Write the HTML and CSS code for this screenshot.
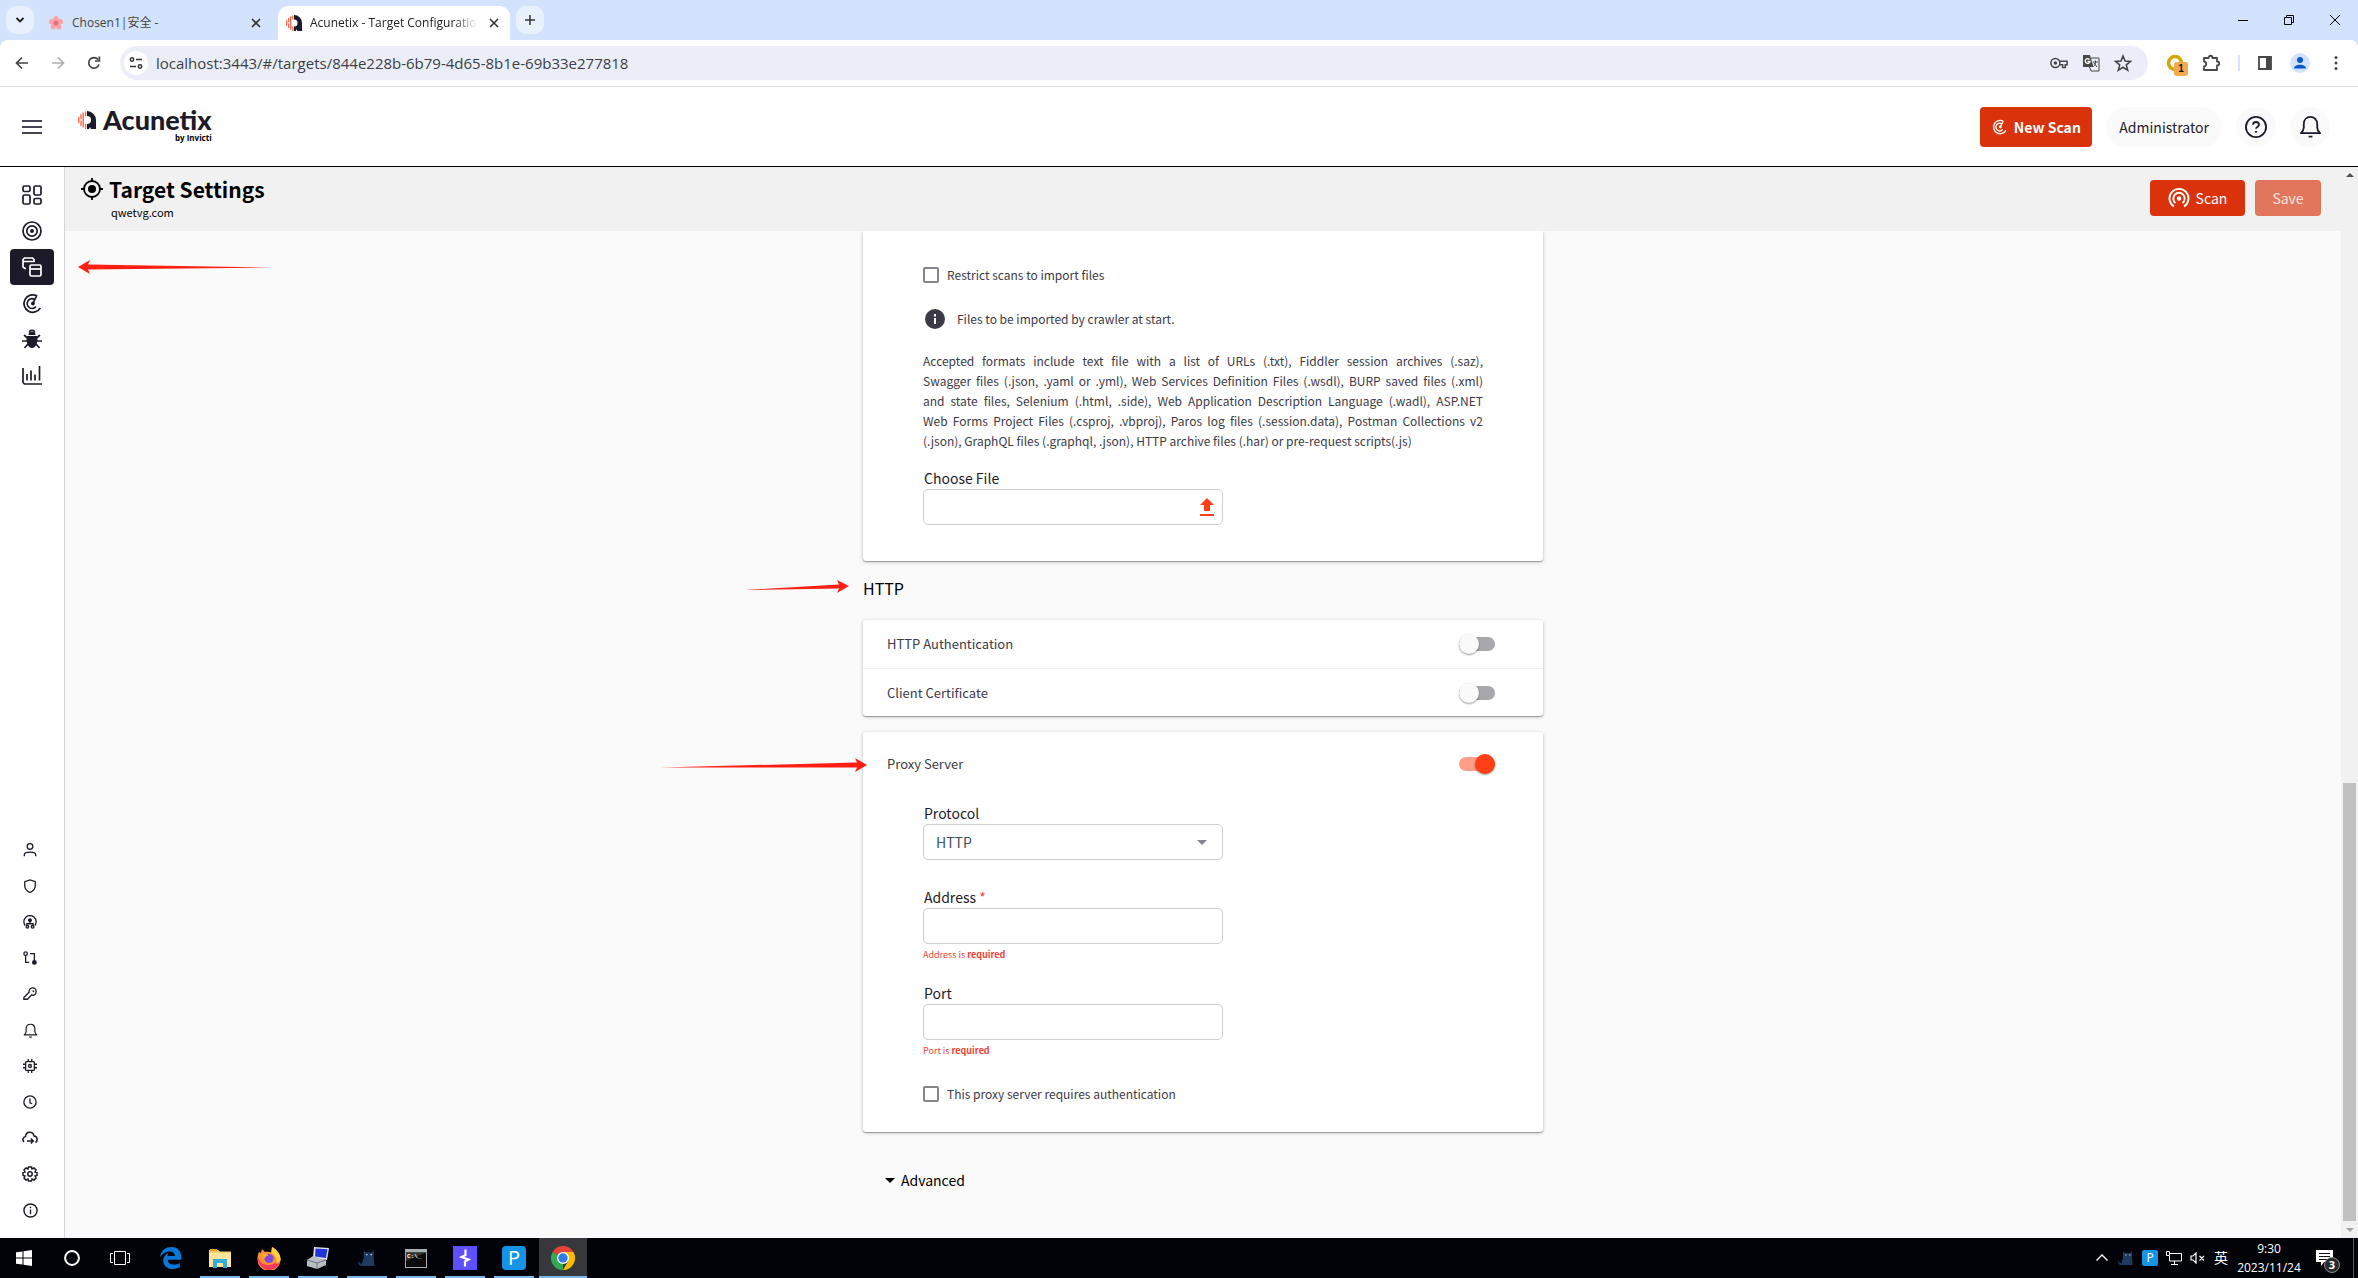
FILE: index.html
```html
<!DOCTYPE html>
<html lang="en">
<head>
<meta charset="utf-8">
<title>Acunetix - Target Configuration</title>
<link rel="stylesheet" href="styles.css">
</head>
<body>
<svg class="defs" aria-hidden="true">
  <symbol id="logo" viewBox="0 0 18 18">
    <path d="M9 0a9 9 0 0 1 9 9v9h-5l-1-2-1 2H9v-5a4 4 0 0 0 0-8z" fill="#1d1b29"/>
    <path d="M.8 6v6M3 3.200v5M3 9.500v5.500M5.200 1.500v15M7.600 .5v4.500M7.600 13v5" stroke="#f5694a" stroke-width="1.400" fill="none"/>
  </symbol>
  <symbol id="radar" viewBox="0 0 24 24">
    <path d="M17 3.200A10 10 0 1 0 21 17M14 7a5.600 5.600 0 1 0 2 8.500M12.500 12l4.500-9.500" fill="none" stroke="currentColor" stroke-width="2"/><circle cx="12.500" cy="12" r="2.200" fill="currentColor"/>
  </symbol>
  <symbol id="bell" viewBox="0 0 24 24">
    <path d="M2 19h20c-2-2-3-3-3-6V9.500C19 5 16 2 12 2S5 5 5 9.500V13c0 3-1 4-3 6zM10 22.500h4" fill="none" stroke="currentColor" stroke-width="1.900" stroke-linejoin="round"/>
  </symbol>
  <symbol id="cross" viewBox="0 0 12 12"><path d="M2 2l8 8M10 2l-8 8" stroke="currentColor" stroke-width="1.600"/></symbol>
  <symbol id="cat" viewBox="0 0 16 16"><path d="M5 1l2 2h5l2-2v7l.500 7H3.500C0 15-.5 12 1 10c-.3 2 .2 3 2.500 3.200L5 8z" fill="#1d3a63"/><path d="M7 5h1.500M11 5h1.500" stroke="#a8c0e0" stroke-width="1.200"/></symbol>
</svg>

<header class="browser">
  <div class="tabs">
    <button class="round-btn" aria-label="Search tabs"><svg viewBox="0 0 12 12" width="12" height="12"><path d="M2.500 4l3.500 3.500L9.500 4" fill="none" stroke="#222" stroke-width="1.900"/></svg></button>
    <div class="tab">
      <svg class="tab-icon" viewBox="0 0 16 16" width="16" height="16"><g fill="#ffa0a6"><circle cx="8" cy="3.500" r="2.600"/><circle cx="12.300" cy="6.700" r="2.600"/><circle cx="10.700" cy="11.700" r="2.600"/><circle cx="5.300" cy="11.700" r="2.600"/><circle cx="3.700" cy="6.700" r="2.600"/></g><circle cx="8" cy="8" r="2.500" fill="#ef6a78"/></svg>
      <span class="tab-title">Chosen1|安全 -</span>
      <button class="tab-close" aria-label="Close tab"><svg width="12" height="12"><use href="#cross"/></svg></button>
    </div>
    <div class="tab tab-active">
      <svg class="tab-icon" width="16" height="16"><use href="#logo"/></svg>
      <span class="tab-title">Acunetix - Target Configuration</span>
      <button class="tab-close" aria-label="Close tab"><svg width="12" height="12"><use href="#cross"/></svg></button>
    </div>
    <button class="round-btn" aria-label="New tab"><svg viewBox="0 0 12 12" width="12" height="12"><path d="M6 1v10M1 6h10" stroke="#333" stroke-width="1.500"/></svg></button>
    <div class="window-controls">
      <button aria-label="Minimize"><svg viewBox="0 0 10 10" width="10" height="10"><path d="M0 5.500h10" stroke="#000"/></svg></button>
      <button aria-label="Restore"><svg viewBox="0 0 10 10" width="10" height="10"><path d="M.5 2.500h7v7h-7zM2.500 2.500v-2h7v7h-2" fill="none" stroke="#000"/></svg></button>
      <button aria-label="Close"><svg viewBox="0 0 10 10" width="10" height="10"><path d="M0 0l10 10M10 0L0 10" stroke="#000"/></svg></button>
    </div>
  </div>
  <div class="toolbar">
    <div class="nav-btns">
      <button aria-label="Back"><svg viewBox="0 0 14 14" width="14" height="14"><path d="M13 7H2M7 1.500L1.500 7 7 12.500" fill="none" stroke="#444" stroke-width="1.700"/></svg></button>
      <button aria-label="Forward"><svg viewBox="0 0 14 14" width="14" height="14"><path d="M1 7h11M7 1.500L12.500 7 7 12.500" fill="none" stroke="#b0b0b0" stroke-width="1.700"/></svg></button>
      <button aria-label="Reload"><svg viewBox="0 0 14 14" width="14" height="14"><path d="M12 8.500A5.300 5.300 0 1 1 11 3.400M12.400 .5v4.500H8" fill="none" stroke="#444" stroke-width="1.700"/></svg></button>
    </div>
    <div class="omnibox">
      <span class="site-info"><svg viewBox="0 0 14 14" width="14" height="14"><path d="M7 3.500h6M1 10.500h6" stroke="#333" stroke-width="1.600"/><circle cx="3" cy="3.500" r="1.700" fill="none" stroke="#333" stroke-width="1.500"/><circle cx="11" cy="10.500" r="1.700" fill="none" stroke="#333" stroke-width="1.500"/></svg></span>
      <input class="url" type="text" aria-label="Address bar" value="localhost:3443/#/targets/844e228b-6b79-4d65-8b1e-69b33e277818">
      <svg viewBox="0 0 20 20" width="18" height="18"><g fill="none" stroke="#474747" stroke-width="1.700"><circle cx="6" cy="10" r="5"/><path d="M10.500 8H19v4h-2v3h-3v-3h-3.500"/></g><circle cx="6" cy="10" r="2" fill="#474747"/></svg>
      <svg viewBox="0 0 18 18" width="18" height="18"><path d="M1 1h7l3.500 12H1z" fill="#474747"/><path d="M9 4h8v13H9l-1.500-4M11 8h5M13.500 6.500v2c0 2-1 3-2 4M12 9l3 4" fill="none" stroke="#474747"/><path d="M7.500 5.500A2.400 2.400 0 1 0 8 7.500H5.500" fill="none" stroke="#fff" stroke-width="1.300"/></svg>
      <svg viewBox="0 0 18 18" width="18" height="18"><path d="M9 2l2 5 5.500.4-4.200 3.500 1.400 5.300L9 13.300l-4.700 2.900 1.400-5.300L1.500 7.400 7 7z" fill="none" stroke="#474747" stroke-width="1.600"/></svg>
    </div>
    <div class="extensions">
      <span class="ext"><svg viewBox="0 0 18 18" width="18" height="18"><path d="M9 15.500A6.500 6.500 0 1 1 15.500 9" fill="none" stroke="#d0aa00" stroke-width="3.500"/></svg><b class="ext-badge">1</b></span>
      <svg viewBox="0 0 18 18" width="18" height="18"><path d="M2 4h4.500c0-3 4-3 4 0H15v3.500c3 0 3 4 0 4V16H2v-3.500c3-.5 3-4.500 0-5z" fill="none" stroke="#474747" stroke-width="1.800" stroke-linejoin="round"/></svg>
      <i class="divider"></i>
      <svg viewBox="0 0 14 14" width="14" height="14"><path d="M1 1h12v12H1z" fill="none" stroke="#474747" stroke-width="1.800"/><path d="M8 1h5v12H8z" fill="#474747"/></svg>
      <svg viewBox="0 0 20 20" width="20" height="20"><circle cx="10" cy="10" r="10" fill="#d3e3fd"/><circle cx="10" cy="7" r="3" fill="#0b57d0"/><path d="M4 15.500c0-5 12-5 12 0z" fill="#0b57d0"/></svg>
      <svg class="kebab" viewBox="0 0 4 16" width="4" height="16"><g fill="#474747"><circle cx="2" cy="2.500" r="1.500"/><circle cx="2" cy="8" r="1.500"/><circle cx="2" cy="13.500" r="1.500"/></g></svg>
    </div>
  </div>
</header>

<header class="app-header">
  <button class="plain menu-btn" aria-label="Menu"><svg viewBox="0 0 20 14" width="20" height="14"><path d="M0 1h20M0 7h20M0 13h20" stroke="#45434f" stroke-width="2"/></svg></button>
  <a class="brand" href="#">
    <svg width="18" height="18"><use href="#logo"/></svg>
    <span class="brand-name">Acunetix<small>by Invicti</small></span>
  </a>
  <div class="header-actions">
    <button class="btn btn-new"><svg width="16" height="16"><use href="#radar"/></svg>New Scan</button>
    <button class="pill">Administrator</button>
    <button class="circle" aria-label="Help"><svg viewBox="0 0 24 24" width="22" height="22"><circle cx="12" cy="12" r="11" fill="none" stroke="#1d1b29" stroke-width="2"/><path d="M8.800 9.500c0-4 6.400-4 6.400 0 0 2.500-3.200 2.500-3.200 4.500" fill="none" stroke="#1d1b29" stroke-width="2"/><circle cx="12" cy="17.300" r="1.200" fill="#1d1b29"/></svg></button>
    <button class="circle" aria-label="Notifications"><svg width="23" height="23"><use href="#bell"/></svg></button>
  </div>
</header>

<div class="workspace">
  <nav class="sidebar" aria-label="Main">
    <div class="side-group">
      <a href="#" aria-label="Overview"><svg viewBox="0 0 20 20" width="20" height="20"><g fill="none" stroke="#1d1b29" stroke-width="1.700"><rect x="1" y="1" width="7" height="5.500" rx="1.500"/><rect x="12" y="1" width="7" height="9" rx="1.500"/><rect x="1" y="10" width="7" height="9" rx="1.500"/><rect x="12" y="13.500" width="7" height="5.500" rx="1.500"/></g></svg></a>
      <a href="#" aria-label="Discovery"><svg viewBox="0 0 20 20" width="20" height="20"><g fill="none" stroke="#1d1b29" stroke-width="1.700"><circle cx="10" cy="10" r="9"/><circle cx="10" cy="10" r="5.200"/></g><circle cx="10" cy="10" r="2" fill="#1d1b29"/></svg></a>
      <a class="side-active" href="#" aria-label="Targets" aria-current="page"><svg viewBox="0 0 20 20" width="20" height="20"><g fill="none" stroke="#fff" stroke-width="1.700"><path d="M4 11.500H3L1 10V2.500L2.500 1h8L12 2.500V5M1 4.500h11"/><rect x="8" y="8" width="11" height="11" rx="1.500"/><path d="M8 12h11"/></g></svg></a>
      <a href="#" aria-label="Scans"><svg width="21" height="21"><use href="#radar"/></svg></a>
      <a href="#" aria-label="Vulnerabilities"><svg viewBox="0 0 20 20" width="20" height="20"><path d="M5 7h10c1.500 6-1 12-5 12S3.500 13 5 7zM6.500 6a3.500 3.500 0 0 1 7 0z" fill="#1d1b29"/><path d="M0 12h5M15 12h5M2 6l3.500 3M18 6l-3.500 3M2.500 19L6 15M17.500 19L14 15M7.500 3.500C7.500.5 12.500.5 12.500 3.500" fill="none" stroke="#1d1b29" stroke-width="1.700"/></svg></a>
      <a href="#" aria-label="Reports"><svg viewBox="0 0 20 20" width="20" height="20"><path d="M1 3v14.500L2.500 19H20M5 15.500V9M9 15.500V5.500M13 15.500v-6M17.500 15.500V1" fill="none" stroke="#1d1b29" stroke-width="1.700"/></svg></a>
    </div>
    <div class="side-group side-small">
      <a href="#" aria-label="Profile"><svg viewBox="0 0 16 16" width="14" height="14"><circle cx="8" cy="4" r="3.200"/><path d="M1.500 15v-1.500c0-4 13-4 13 0V15"/></svg></a>
      <a href="#" aria-label="Security"><svg viewBox="0 0 16 16" width="14" height="14"><path d="M8 1l6 2v5c0 4-3 6-6 7.500C5 14 2 12 2 8V3z"/></svg></a>
      <a href="#" aria-label="Agents"><svg viewBox="0 0 16 16" width="14" height="14"><path d="M2.500 12A7 7 0 1 1 13.500 12M8 8v2M4.500 12v-2h7v2"/><circle cx="8" cy="6" r="1.500" fill="#1d1b29"/><circle cx="5" cy="13.500" r="1.500"/><circle cx="11" cy="13.500" r="1.500"/></svg></a>
      <a href="#" aria-label="Integrations"><svg viewBox="0 0 16 16" width="14" height="14"><circle cx="3" cy="3" r="2"/><circle cx="13" cy="13" r="2" fill="#1d1b29"/><path d="M3 5v8h4M13 11V3H8"/></svg></a>
      <a href="#" aria-label="Licence"><svg viewBox="0 0 16 16" width="14" height="14"><path d="M1 12l6-6c-1-6 8-7 8-1 0 4-3 5-5 4l-5 5H1zM11 4l1.500 1.500"/></svg></a>
      <a href="#" aria-label="Notification settings"><svg width="15" height="15"><use href="#bell"/></svg></a>
      <a href="#" aria-label="Engines"><svg viewBox="0 0 16 16" width="14" height="14"><rect x="3" y="3" width="10" height="10" rx="1"/><circle cx="8" cy="8" r="1.700"/><path d="M6 0v3M10 0v3M6 13v3M10 13v3M0 6h3M0 10h3M13 6h3M13 10h3"/></svg></a>
      <a href="#" aria-label="Excluded hours"><svg viewBox="0 0 16 16" width="14" height="14"><circle cx="8" cy="8" r="7"/><path d="M8 4v5l2.500 1"/></svg></a>
      <a href="#" aria-label="Proxy"><svg viewBox="0 0 16 16" width="16" height="16"><path d="M2 12C0 10 1 7 3.500 6.500 4 1 11 1 12 6c3.500 0 4 5 1.500 6.500M5 11h6M8.800 8.500l2.500 2.500-2.500 2.500"/></svg></a>
      <a href="#" aria-label="Settings"><svg viewBox="0 0 16 16" width="16" height="16"><circle cx="8" cy="8" r="2.200"/><path d="M6.500 1h3l.5 2 2-1 2 2-1 2 2 .5v3l-2 .5 1 2-2 2-2-1-.5 2h-3L6 13l-2 1-2-2 1-2-2-.5v-3L3 6 2 4l2-2 2 1z"/></svg></a>
      <a href="#" aria-label="About"><svg viewBox="0 0 16 16" width="15" height="15"><circle cx="8" cy="8" r="7"/><path d="M8 7v5M8 4v1.500"/></svg></a>
    </div>
    <svg class="arrow arrow-side" viewBox="0 0 194 14" width="194" height="14"><path d="M0 7L12 0 10 4.500 194 7.500 10 9.500 12 14z"/></svg>
  </nav>

  <div class="page">
    <header class="page-header">
      <div>
        <h1><svg viewBox="0 0 22 22" width="22" height="22"><circle cx="11" cy="11" r="8" fill="none" stroke="#000" stroke-width="1.800"/><circle cx="11" cy="11" r="4" fill="#000"/><path d="M11 0v3M11 19v3M0 11h3M19 11h3" stroke="#000" stroke-width="1.800"/></svg>Target Settings</h1>
        <p class="host">qwetvg.com</p>
      </div>
      <div class="page-actions">
        <button class="btn btn-scan"><svg viewBox="0 0 22 22" width="22" height="22"><g fill="none" stroke="#fff" stroke-width="1.900"><path d="M6 19.500A9.500 9.500 0 1 1 16 19.500"/><path d="M7.500 16A5.700 5.700 0 1 1 14.500 16"/></g><circle cx="11" cy="11.500" r="2.200" fill="#fff"/></svg>Scan</button>
        <button class="btn btn-save" disabled>Save</button>
      </div>
    </header>
    <main class="content">
      <section class="card card-import">
        <label class="check"><input type="checkbox">Restrict scans to import files</label>
        <p class="hint"><svg viewBox="0 0 20 20" width="20" height="20"><circle cx="10" cy="10" r="10" fill="#3c3a47"/><path d="M10 9v6M10 5v2.500" stroke="#fff" stroke-width="2"/></svg>Files to be imported by crawler at start.</p>
        <p class="formats">
          <span>Accepted formats include text file with a list of URLs (.txt), Fiddler session archives (.saz),</span>
          <span>Swagger files (.json, .yaml or .yml), Web Services Definition Files (.wsdl), BURP saved files (.xml)</span>
          <span>and state files, Selenium (.html, .side), Web Application Description Language (.wadl), ASP.NET</span>
          <span>Web Forms Project Files (.csproj, .vbproj), Paros log files (.session.data), Postman Collections v2</span>
          <span>(.json), GraphQL files (.graphql, .json), HTTP archive files (.har) or pre-request scripts(.js)</span>
        </p>
        <div class="field">
          <label for="file">Choose File</label>
          <div class="file-box">
            <input id="file" type="text" readonly>
            <button class="plain" aria-label="Upload"><svg viewBox="0 0 14 18" width="14" height="18"><path d="M7 0l7 7h-4v6H4V7H0zM0 16h14v2H0z" fill="#ff4017"/></svg></button>
          </div>
        </div>
      </section>

      <h2>HTTP<svg class="arrow arrow-http" viewBox="0 0 105 14" width="105" height="14"><path d="M105 6L93 0l2 4.500L0 10l95-1.500L93 13z"/></svg></h2>

      <section class="card">
        <div class="row"><label for="auth">HTTP Authentication</label><input id="auth" class="toggle" type="checkbox" role="switch"></div>
        <div class="row"><label for="cert">Client Certificate</label><input id="cert" class="toggle" type="checkbox" role="switch"></div>
      </section>

      <section class="card card-proxy">
        <div class="row"><label for="proxy">Proxy Server</label><input id="proxy" class="toggle" type="checkbox" role="switch" checked><svg class="arrow arrow-proxy" viewBox="0 0 207 14" width="207" height="14"><path d="M207 7L195 0l2 4.500L0 9.500l197 0L195 14z"/></svg></div>
        <div class="proxy-form">
          <div class="field field-gap">
            <label for="protocol">Protocol</label>
            <div class="select-box"><select id="protocol"><option>HTTP</option></select></div>
          </div>
          <div class="field">
            <label for="address">Address <span class="star">*</span></label>
            <input id="address" type="text">
            <p class="error">Address is <b>required</b></p>
          </div>
          <div class="field">
            <label for="port">Port</label>
            <input id="port" type="text">
            <p class="error">Port is <b>required</b></p>
          </div>
          <label class="check"><input type="checkbox">This proxy server requires authentication</label>
        </div>
      </section>

      <button class="plain advanced"><i class="caret"></i>Advanced</button>
    </main>
  </div>

  <div class="scrollbar" aria-hidden="true">
    <i class="tri tri-up"></i>
    <i class="thumb"></i>
    <i class="tri tri-down"></i>
  </div>
</div>

<footer class="taskbar">
  <div class="task-list">
    <button aria-label="Start"><svg viewBox="0 0 16 16" width="16" height="16"><path d="M0 2.300L6.500 1.400v6.100H0zM7.500 1.200L16 0v7.500H7.500zM0 8.500h6.500v6.100L0 13.700zM7.500 8.500H16V16l-8.500-1.200z" fill="#fff"/></svg></button>
    <button aria-label="Search"><svg viewBox="0 0 16 16" width="16" height="16"><circle cx="8" cy="8" r="6.900" fill="none" stroke="#fff" stroke-width="2"/></svg></button>
    <button class="task-view" aria-label="Task view"><svg viewBox="0 0 20 14" width="20" height="14"><path d="M4.500.5h11v13h-11zM3 2.500H.5v9H3M17 2.500h2.500v9H17" fill="none" stroke="#fff"/></svg></button>
    <button aria-label="Edge"><svg viewBox="0 0 20 20" width="22" height="22"><path d="M0 9C1 3 5 0 10.500 0 17 0 20 5 19.500 11.500H7c.3 5 7 5.500 11 3v4C11 22 3 19.500 3 12.500 3 9 5 6.500 8 5.200 7 6.200 6.700 7.200 6.700 8.200h6.800C13.500 2.500 4.500 3 0 9z" fill="#0a78d7"/></svg></button>
    <button class="open" aria-label="Explorer"><svg viewBox="0 0 22 20" width="22" height="20"><path d="M0 2h9l2 1.500h11V19H0z" fill="#f3cd6a"/><path d="M0 5h22v14H0z" fill="#fde49a"/><path d="M1 1h7v2H1z" fill="#e9a21e"/><path d="M4 20v-9h14v9h-4v-5H8v5z" fill="#35ace0"/></svg></button>
    <button class="open" aria-label="Firefox"><svg viewBox="0 0 24 24" width="24" height="24"><path d="M2 6l2 1 1-4 3 3c2-.5 4-.5 6 .5L15 1c4 2 9 7 8.500 13A11.500 11.500 0 0 1 .5 13C.5 10 1 8 2 6z" fill="#ff9130"/><path d="M.8 11c2 4 4 8 10 8 5 0 9-3 12.500-6C23 20 18 24 12 24S0 18 .8 11z" fill="#ff3b5c"/><path d="M15 1c4 2 9 7 8.500 13-1 2-2 3-4 4 1-6-2-9-5-11z" fill="#ffd43a"/><circle cx="12" cy="12.500" r="4.600" fill="#7d4bd8"/><path d="M5 8c3-1 5 0 6.500 1.500-2 0-3 1-4 3z" fill="#ffae3a"/></svg></button>
    <button class="open" aria-label="Remote tools"><svg viewBox="0 0 24 24" width="24" height="24"><path d="M8 1l15 1-2 12-14-2z" fill="#dfe3e8"/><path d="M9.500 2.500l12 .8L20 12 9 10.500z" fill="#1f35d8"/><path d="M1 14l6-4 13 4v5l-9 4-10-3z" fill="#b9bec4"/><path d="M1 14l10 3 9-3M11 17v6" stroke="#6e757c" fill="none"/></svg></button>
    <button class="open" aria-label="Cat"><svg width="18" height="18"><use href="#cat"/></svg></button>
    <button class="open" aria-label="Command prompt"><svg viewBox="0 0 22 19" width="22" height="19"><path d="M0 0h22v19H0z" fill="#a9adb0"/><path d="M1 3.500h20V18H1z" fill="#0a0a0a"/><path d="M1 3.500h20L1 12z" fill="#333"/><text x="2" y="9" class="prompt">C:\_</text></svg></button>
    <button class="open" aria-label="Burp Suite"><svg viewBox="0 0 24 24" width="24" height="24"><path d="M0 0h24v24H0z" fill="#5f50ff"/><path d="M12.500 3.500v5.500l-4 2 7 2.500-3.500 2v5" fill="none" stroke="#fff" stroke-width="2.200"/></svg></button>
    <button class="open" aria-label="P"><span class="p-icon">P</span></button>
    <button class="open open-active" aria-label="Chrome"><svg viewBox="0 0 24 24" width="24" height="24"><path d="M12 12L1.600 6a12 12 0 0 1 20.800 0z" fill="#ea4335"/><path d="M12 12h0L1.600 6A12 12 0 0 0 12 24z" fill="#34a853"/><path d="M12 24A12 12 0 0 0 22.400 6H12l5.200 9z" fill="#fbbc05"/><circle cx="12" cy="12" r="6" fill="#fff"/><circle cx="12" cy="12" r="4.700" fill="#2f7de9"/></svg></button>
  </div>
  <div class="tray">
    <svg class="chevron" viewBox="0 0 12 8" width="12" height="8"><path d="M.5 6.500L6 1l5.500 5.500" fill="none" stroke="#fff" stroke-width="1.300"/></svg>
    <svg width="16" height="16"><use href="#cat"/></svg>
    <span class="p-icon p-small">P</span>
    <svg viewBox="0 0 16 14" width="16" height="14"><path d="M4 2.500h11.500v7.500H3.500V5M8.500 10v3M5 13.500h7M.5.500h3v4h-3z" fill="none" stroke="#fff"/></svg>
    <svg viewBox="0 0 16 12" width="16" height="12"><path d="M1 4h2l3-3v10L3 8H1zM9.500 4l4.500 4.500M14 4L9.500 8.500" fill="none" stroke="#fff" stroke-width="1.200"/></svg>
    <span>英</span>
    <time class="clock">9:30<br>2023/11/24</time>
    <span class="notice"><svg viewBox="0 0 17 17" width="17" height="17"><path d="M0 0h17v12H8l-3 4v-4H0z" fill="#fff"/><path d="M3 3.500h11M3 6.500h11M3 9.500h11" stroke="#111"/></svg><b>3</b></span>
    <i class="desktop-edge"></i>
  </div>
</footer>
</body>
</html>
```
FILE: styles.css
```css
* { box-sizing: border-box; }
body {
  margin: 0;
  height: 100vh;
  display: flex;
  flex-direction: column;
  overflow: hidden;
  background: #fafafa;
  color: #1d1b29;
  font: 14px/20px "Noto Sans CJK SC", "Noto Sans", sans-serif;
}
button { border: 0; padding: 0; background: none; color: inherit; font: inherit; display: flex; align-items: center; justify-content: center; }
input, select { font: inherit; }
h1, h2, p { margin: 0; }
svg { flex: none; display: block; }
.defs { position: absolute; width: 0; height: 0; }

/* Browser frame */
.browser { flex: none; background: #d3e3fd; font: 12px/20px "Open Sans", "Noto Sans CJK SC", sans-serif; }
.tabs { display: flex; height: 40px; padding-left: 6px; align-items: center; }
.round-btn { width: 28px; height: 28px; border-radius: 10px; background: #e9f1fe; }
.tab { display: flex; align-items: center; width: 232px; height: 34px; margin: 6px 0 0 6px; padding: 0 8px; gap: 8px; color: #444; }
.tab-active { margin-right: 6px; background: #fff; border-radius: 10px 10px 0 0; color: #222; }
.tab-title { flex: 1; overflow: hidden; white-space: nowrap; }
.tab-active .tab-title { mask-image: linear-gradient(90deg, #000 85%, transparent); }
.tab-close { width: 16px; height: 16px; color: #333; }
.window-controls { display: flex; margin-left: auto; align-self: stretch; }
.window-controls button { width: 46px; }
.toolbar { display: flex; align-items: center; height: 47px; background: #fff; border-bottom: 1px solid #dedfe2; border-radius: 8px 8px 0 0; padding: 0 20px 0 4px; }
.nav-btns { display: flex; }
.nav-btns button { width: 36px; height: 34px; }
.omnibox { flex: 1; display: flex; align-items: center; gap: 14px; height: 34px; margin-left: 8px; padding: 0 16px 0 4px; border-radius: 17px; background: #ebeef8; }
.site-info { display: flex; align-items: center; justify-content: center; width: 24px; height: 24px; border-radius: 50%; background: #fff; }
.url { flex: 1; border: 0; background: none; padding: 0; margin-left: -6px; color: #3c3f44; font-size: 15px; }
.extensions { display: flex; align-items: center; gap: 18px; margin-left: 18px; }
.kebab { margin-left: 6px; }
.ext { position: relative; }
.ext-badge { position: absolute; left: 8px; top: 8px; width: 14px; height: 14px; border-radius: 3px; background: #f2ab4c; color: #111; font: bold 10px/14px "Liberation Sans", sans-serif; text-align: center; }
.divider { width: 2px; height: 16px; background: #d3e3fd; }

/* Application header */
.app-header { flex: none; display: flex; align-items: center; height: 80px; padding: 0 28px 0 22px; background: #fff; border-bottom: 1px solid #000; }
.brand { display: flex; gap: 7px; margin-left: 36px; padding-bottom: 4px; color: #1d1b29; text-decoration: none; align-items: flex-start; }
.brand svg { margin-top: 4px; }
.brand-name { display: flex; flex-direction: column; font: 900 27px/26px Lato, sans-serif; }
.brand small { align-self: flex-end; font: bold 8px/10px "Open Sans", sans-serif; color: #000; }
.header-actions { display: flex; gap: 14px; margin-left: auto; }
.btn { height: 36px; border-radius: 4px; background: #da320b; color: #fff; gap: 6px; }
.btn-new { width: 112px; height: 40px; font-weight: 700; }
.pill { height: 40px; padding: 0 13px; border-radius: 20px; background: #fafafa; }
.circle { width: 40px; height: 40px; border-radius: 50%; background: #fafafa; }

/* Workspace */
.workspace { flex: 1; display: flex; min-height: 0; }
.sidebar { position: relative; flex: none; display: flex; flex-direction: column; justify-content: space-between; width: 65px; padding: 10px 0; background: #fff; border-right: 1px solid #d5d5d8; }
.side-group { display: flex; flex-direction: column; align-items: center; }
.side-group a { display: flex; align-items: center; justify-content: center; width: 44px; height: 36px; border-radius: 4px; color: #1d1b29; }
.side-group .side-active { background: #1d1b29; }
.side-small { margin-right: 4px; }
.side-small svg { fill: none; stroke: #1d1b29; stroke-width: 1.500; }
.arrow { position: absolute; fill: #ff1f12; }
.arrow-side { left: 78px; top: 93px; z-index: 1; }
.page { flex: 1; min-width: 0; display: flex; flex-direction: column; }
.page-header { flex: none; display: flex; justify-content: space-between; height: 64px; padding: 0 20px 0 16px; background: #f1f1f1; color: #000; }
h1 { display: flex; align-items: center; gap: 6px; font-size: 21px; line-height: 44px; font-weight: 700; }
.host { margin: -8px 0 0 30px; font-size: 11px; line-height: 18px; }
.page-actions { display: flex; gap: 10px; padding-top: 13px; }
.btn-scan { width: 95px; }
.btn-save { width: 66px; background: #e1765d; color: #fbe3dd; }
.content { flex: 1; min-height: 0; display: flex; flex-direction: column; width: 680px; margin: 0 auto; }
.card { background: #fff; border-radius: 3px; box-shadow: 0 1px 1px rgba(0,0,0,.3), 0 1px 4px rgba(0,0,0,.2); color: #3c3a47; }
.card-import { padding: 34px 60px 36px; border-radius: 0 0 3px 3px; clip-path: inset(0 -6px -6px -6px); }
.check { display: flex; align-items: center; gap: 8px; height: 20px; font-size: 12px; }
.check input { appearance: none; width: 16px; height: 16px; margin: 0; border: 2px solid #85848c; border-radius: 2px; }
.hint { display: flex; align-items: center; gap: 12px; height: 20px; margin: 24px 0 22px; padding-left: 2px; font-size: 12px; }
.formats { margin-bottom: 18px; font-size: 12px; }
.formats span { display: block; text-align-last: justify; white-space: nowrap; }
.formats span:last-child { text-align-last: left; }
.field { width: 300px; color: #1d1b29; }
.field-gap { margin-bottom: 28px; }
.field label { display: block; height: 20px; padding-left: 1px; line-height: 18px; }
.field input, .field select { width: 100%; height: 36px; padding: 0 12px; border: 1px solid #ceced1; border-radius: 5px; background: #fff; }
.file-box, .select-box { display: grid; align-items: center; }
.file-box > * { grid-area: 1 / 1; }
.file-box button { justify-self: end; margin-right: 9px; }
.select-box > select { appearance: none; grid-area: 1 / 1; color: #3f5261; }
.select-box::after { content: ""; grid-area: 1 / 1; justify-self: end; margin-right: 16px; border: 5px solid transparent; border-top-color: #85848c; border-bottom: 0; }
h2 { position: relative; height: 59px; padding-top: 13px; font-size: 16px; line-height: 28px; font-weight: 400; color: #000; }
.arrow-http { right: 694px; top: 19px; }
.row { position: relative; display: flex; align-items: center; justify-content: space-between; height: 48px; padding: 0 48px 0 24px; font-size: 13px; }
.row + .row { border-top: 1px solid #eeeeef; }
.toggle { appearance: none; position: relative; width: 36px; height: 14px; margin: 0; border-radius: 7px; background: #a8a7ac; }
.toggle::before { content: ""; position: absolute; left: 0; top: -3px; width: 20px; height: 20px; border-radius: 50%; background: #fafafa; box-shadow: 0 1px 2px rgba(0,0,0,.4); }
.toggle:checked { background: #ff9d86; }
.toggle:checked::before { left: 16px; background: #ff4017; }
.card-proxy { margin-top: 16px; padding: 8px 0 28px; }
.arrow-proxy { left: -203px; top: 18px; }
.proxy-form { padding: 16px 60px 0; }
.proxy-form .check { margin-top: 4px; }
.error { height: 40px; padding-top: 1px; font-size: 9px; color: #f44336; }
.star { color: #f44336; }
.advanced { align-self: flex-start; gap: 6px; margin: 38px 0 0 22px; color: #000; }
.caret { border: 5px solid transparent; border-top-color: #000; border-bottom: 0; }
.scrollbar { flex: none; display: flex; flex-direction: column; align-items: center; width: 17px; padding: 6px 0; background: #f1f1f1; }
.tri { border: 4px solid transparent; }
.tri-up { border-top: 0; border-bottom-color: #505050; }
.tri-down { border-bottom: 0; border-top-color: #a3a3a3; margin-top: 7px; }
.thumb { width: 13px; height: 41.4%; margin-top: auto; background: #c1c1c1; }

/* Taskbar */
.taskbar { flex: none; display: flex; justify-content: space-between; height: 40px; background: #020308; color: #fff; font-family: "Open Sans", "Noto Sans CJK SC", sans-serif; }
.task-list { display: flex; gap: 1px; }
.task-list button { width: 48px; border-bottom: 2px solid transparent; border-top: 2px solid transparent; }
.task-list button:first-child, .task-list button:nth-child(2) { margin-right: -1px; }
.task-list .task-view { margin-right: 2px; }
.task-list .open { background: linear-gradient(#76b9ed, #76b9ed) bottom / 40px 2px no-repeat border-box; }
.task-list .open-active { background: linear-gradient(#76b9ed, #76b9ed) bottom / 48px 2px no-repeat border-box #37383b; }
.prompt { font: bold 6px "Liberation Mono", monospace; fill: #fff; }
.p-icon { width: 24px; height: 24px; border-radius: 4px; background: #1594e6; font: 20px/24px "Open Sans", sans-serif; text-align: center; color: #fff; }
.p-small { width: 16px; height: 16px; border-radius: 2px; font-size: 12px; line-height: 16px; }
.tray { display: flex; align-items: center; gap: 8px; }
.chevron { margin-right: 2px; }
.clock { width: 66px; font-size: 12px; line-height: 19px; text-align: center; }
.notice { position: relative; margin-left: 6px; }
.notice b { position: absolute; left: 8px; top: 7px; width: 16px; height: 16px; border: 1px solid #8a8a8a; border-radius: 50%; background: #2b2b2b; font-size: 11px; line-height: 14px; text-align: center; }
.desktop-edge { width: 5px; height: 40px; margin-left: 12px; border-left: 1px solid #5a5a5e; }
```
